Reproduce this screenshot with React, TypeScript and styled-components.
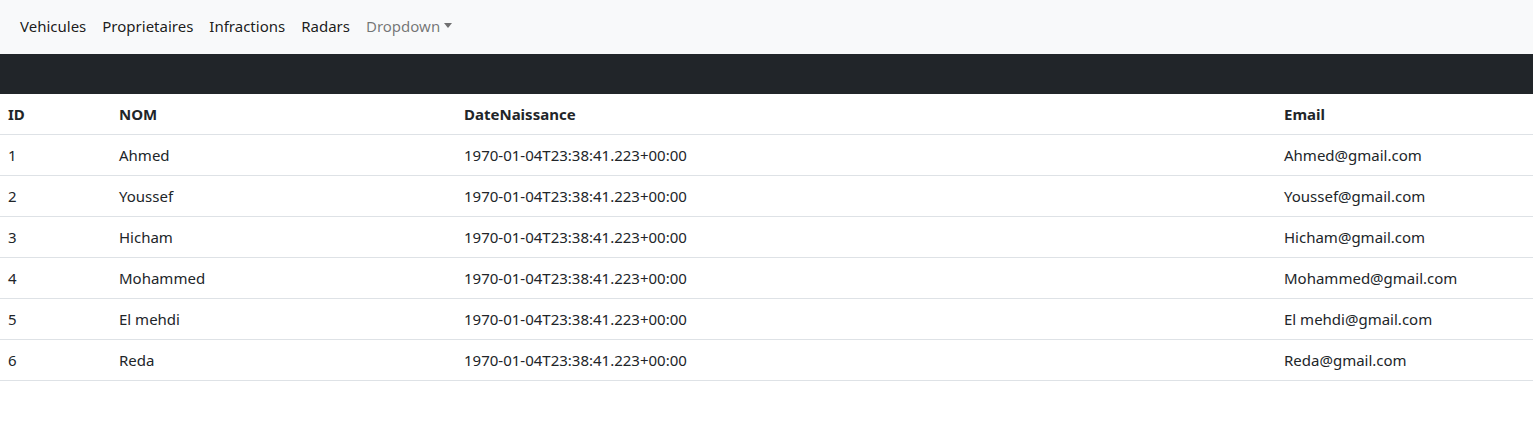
import React from "react";
import styled, { createGlobalStyle } from "styled-components";

const Global = createGlobalStyle`
  html, body { margin: 0; padding: 0; background: #fff; }
  body {
    font-family: "Noto Sans", "Open Sans", sans-serif;
    font-size: 15px;
    line-height: 24px;
    color: #212529;
  }
`;

const Navbar = styled.nav`
  display: flex;
  align-items: center;
  height: 54px;
  box-sizing: border-box;
  padding: 0 12px 2px;
  background: #f8f9fa;
`;

const NavLink = styled.a<{ $muted?: boolean }>`
  display: inline-flex;
  align-items: center;
  padding: 8px 8px;
  color: ${(p) => (p.$muted ? "rgba(0,0,0,0.55)" : "rgba(0,0,0,0.9)")};
  text-decoration: none;
  cursor: pointer;
`;

const Caret = styled.span`
  display: inline-block;
  margin-left: 4px;
  width: 0;
  height: 0;
  border-top: 5px solid currentColor;
  border-left: 4px solid transparent;
  border-right: 4px solid transparent;
  transform: translateY(-1px);
`;

const DarkBar = styled.div`
  height: 40px;
  background: #212529;
`;

const Table = styled.table`
  width: 100%;
  border-collapse: collapse;
  table-layout: fixed;
`;

const Th = styled.th<{ $w?: number }>`
  box-sizing: border-box;
  text-align: left;
  font-weight: 700;
  padding: 8px;
  border-bottom: 1px solid #dee2e6;
  width: ${(p) => (p.$w ? `${p.$w}px` : "auto")};
`;

const Td = styled.td`
  padding: 8px;
  border-bottom: 1px solid #dee2e6;
  white-space: nowrap;
`;

const rows = [
  [1, "Ahmed"],
  [2, "Youssef"],
  [3, "Hicham"],
  [4, "Mohammed"],
  [5, "El mehdi"],
  [6, "Reda"],
] as const;

export default function App() {
  return (
    <>
      <Global />
      <Navbar>
        <NavLink>Vehicules</NavLink>
        <NavLink>Proprietaires</NavLink>
        <NavLink>Infractions</NavLink>
        <NavLink>Radars</NavLink>
        <NavLink $muted>
          Dropdown
          <Caret />
        </NavLink>
      </Navbar>
      <DarkBar />
      <Table>
        <thead>
          <tr>
            <Th $w={111}>ID</Th>
            <Th $w={345}>NOM</Th>
            <Th $w={820}>DateNaissance</Th>
            <Th>Email</Th>
          </tr>
        </thead>
        <tbody>
          {rows.map(([id, name]) => (
            <tr key={id}>
              <Td>{id}</Td>
              <Td>{name}</Td>
              <Td>1970-01-04T23:38:41.223+00:00</Td>
              <Td>{name}@gmail.com</Td>
            </tr>
          ))}
        </tbody>
      </Table>
    </>
  );
}
